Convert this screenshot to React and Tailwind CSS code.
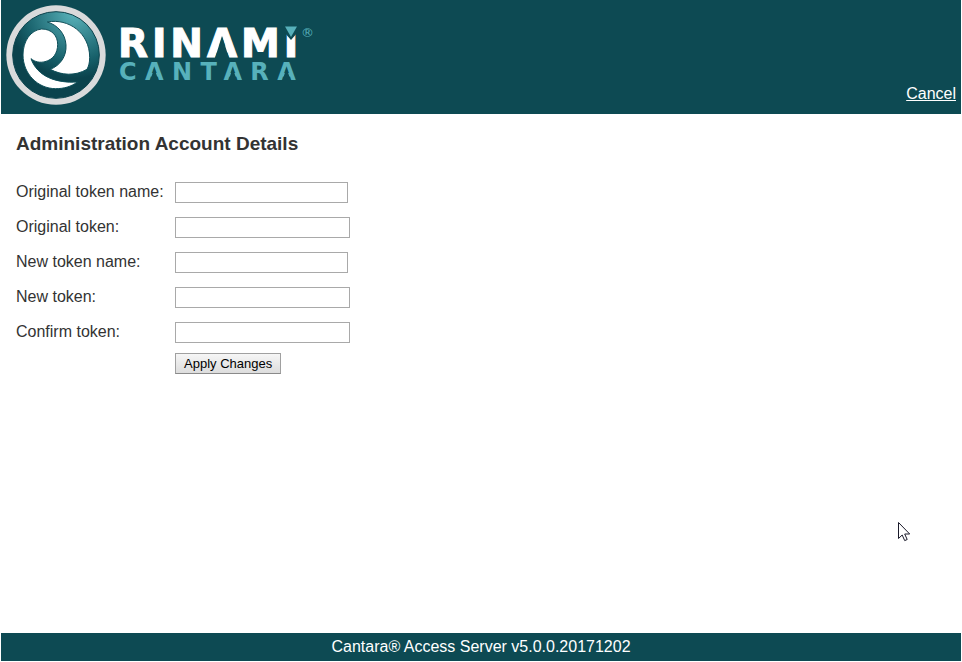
import { useState } from 'react'
import { clsx } from 'clsx'

const FIELDS = [
  { name: 'originalName', label: 'Original token name:', type: 'text' },
  { name: 'original', label: 'Original token:', type: 'password' },
  { name: 'newName', label: 'New token name:', type: 'text' },
  { name: 'newToken', label: 'New token:', type: 'password' },
  { name: 'confirm', label: 'Confirm token:', type: 'password' },
]

function Emblem() {
  return (
    <svg viewBox="0 0 300 300" className="w-25 h-25 shrink-0" aria-hidden="true">
      <defs>
        <radialGradient id="sea" gradientUnits="userSpaceOnUse" cx="205" cy="20" r="200">
          <stop offset="0" stopColor="#5bb5bd" />
          <stop offset="0.35" stopColor="#3b8d96" />
          <stop offset="0.75" stopColor="#17606a" />
          <stop offset="1" stopColor="#0b434d" />
        </radialGradient>
      </defs>
      <circle cx="150" cy="150" r="149" fill="#d9dadb" />
      <circle cx="150" cy="150" r="130" fill="url(#sea)" stroke="#0b434d" strokeWidth="3" />
      <g fill="#fff" stroke="#0e4f59" strokeWidth="3">
        <path d="M124 51 C188 39 251 84 251 157 C251 173 248 184 243 193 C207 214 166 211 133 193 C163 181 182 154 180 120 C178 86 155 60 124 51Z" />
        <path d="M75 161 C87 171 102 174 117 170 C141 164 155 145 155 118 C155 92 137 72 107 72 C74 75 51 108 51 150 C51 206 95 251 149 251 C174 251 195 245 214 231 C151 235 94 215 75 161Z" />
      </g>
    </svg>
  )
}

function Wordmark() {
  return (
    <svg viewBox="0 0 208 80" className="w-52 h-20 shrink-0" fontFamily="'DejaVu Sans', sans-serif" fontWeight="700">
      <text x="0" y="48" fontSize="39" fill="#fff" stroke="#fff" className="tracking-widest">RINAMI</text>
      <text x="1" y="71" fontSize="24" fill="#57b1bb" className="tracking-[0.35em]">CANTARA</text>
      {/* open the A's at the foot */}
      <path d="M97 49h14l-7 -22z M32 72h8.6l-4.3 -13z M110.4 72h8.6l-4.3 -13z M164.2 72h8.6l-4.3 -13z" fill="#0d4a53" />
      <path d="M166 17h14v6l-7 8l-7 -8z" fill="#0d4a53" />
      <path d="M167 17.5h12l-6 10.5z" fill="#57b1bb" />
      <text x="183" y="28" fontSize="13" fontWeight="400" fill="#57b1bb">®</text>
    </svg>
  )
}

export default function App() {
  const [values, setValues] = useState({})

  return (
    <div className="min-h-screen flex flex-col px-px pb-px bg-white text-base text-[#333333] font-['Liberation_Sans',Arial,sans-serif]">
      <header className="flex justify-between items-end bg-[#0d4a53] pl-1 pr-[5px] pt-1 pb-2">
        <div className="flex items-start gap-3 pl-px pt-px pb-px">
          <Emblem />
          <div className="pt-1"><Wordmark /></div>
        </div>
        <a href="#cancel" className="text-white underline leading-6">Cancel</a>
      </header>

      <main className="grow px-[15px] pt-4">
        <h1 className="text-[19px] leading-7 font-bold">Administration Account Details</h1>
        <form className="mt-[17px]" onSubmit={(e) => e.preventDefault()}>
          {FIELDS.map((f) => (
            <div key={f.name} className="flex items-center h-[35px]">
              <label htmlFor={f.name} className="w-[159px] pb-0.5 shrink-0">{f.label}</label>
              <input
                id={f.name}
                type={f.type}
                value={values[f.name] || ''}
                onChange={(e) => setValues({ ...values, [f.name]: e.target.value })}
                className={clsx('h-[21px] border border-[#a9a9a9] px-0.5 text-sm bg-white', f.type === 'text' ? 'w-[173px]' : 'w-[175px]')}
              />
            </div>
          ))}
          <button type="submit" className="block ml-[159px] mt-[3px] h-[21px] px-2 border border-[#a0a0a0] border-b-[#8a8a8a] bg-linear-to-b from-[#f6f6f6] to-[#dddddd] text-[13px] leading-none text-black">
            Apply Changes
          </button>
        </form>
      </main>

      <footer className="bg-[#0d4a53] text-white text-center h-7 leading-7">Cantara® Access Server v5.0.0.20171202</footer>

      {/* pointer */}
      <svg viewBox="0 0 12 20" className="absolute left-[898px] top-[522px] w-3 h-5" aria-hidden="true">
        <path d="M0.5 0.5v16l3.7-3.5 2.5 5.6 2.5-1.1-2.5-5.5h5z" fill="#fff" stroke="#1a1a2a" />
      </svg>
    </div>
  )
}
